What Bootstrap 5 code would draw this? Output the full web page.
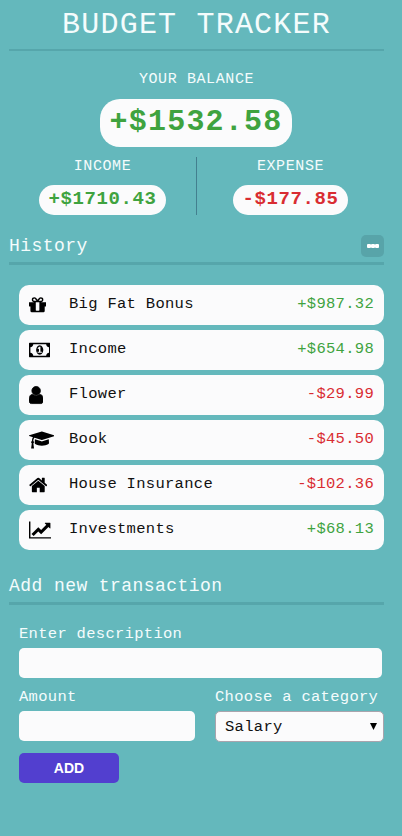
<!DOCTYPE html>
<html lang="en">
<head>
<meta charset="utf-8">
<meta name="viewport" content="width=device-width, initial-scale=1">
<title>Budget Tracker</title>
<link href="https://cdn.jsdelivr.net/npm/bootstrap@5.3.0/dist/css/bootstrap.min.css" rel="stylesheet">
<style>
body{background:#64b8bc;color:#f4fcfc;font:16px/18px "Courier New","Liberation Mono",monospace;min-height:836px;overflow:hidden}
.tracker{width:375px;margin-left:9px}
.app-title{font-size:30px;letter-spacing:1.2px;font-weight:400;line-height:36px;height:51px;padding-top:7px;border-bottom:2px solid #56a6ab}
.caption{font-size:15px;letter-spacing:.6px;line-height:18px}
.balance{padding-top:20px}
.pill{background:#fbfbfc;font-weight:700}
.pill-lg{font-size:30px;letter-spacing:1.2px;line-height:46px;height:48px;width:192px;border-radius:20px;margin:10px 1px 0 0}
.pill-sm{font-size:19px;letter-spacing:.6px;line-height:29px;height:30px;padding:0 9.5px;border-radius:15px}
.gain{color:#3fa33f}.loss{color:#d92c31}
.totals{height:58px;margin-top:10px}
.totals>div{width:187px}
.totals>div:first-child{border-right:1px solid #43808f;width:188px}
.totals .caption{line-height:20px}
.block-history{margin-top:20px}
.block-add{margin-top:25px}
.section-title{font-size:18px;letter-spacing:.43px;font-weight:400;line-height:22px;border-bottom:3px solid #56a6ab;height:30px}
.more{width:23px;height:22px;border-radius:5px;background:#58a4a9;border:0}
.more i{width:4px;height:4px;border-radius:1px;background:#fff}
.entries{gap:5px;margin:20px 0 0 10px}
.entry{height:40px;border-radius:10px;background:#fbfbfc;color:#111;padding:0 10px 0 9.5px}
.entry .glyph{width:40.5px;height:20px}
.entry svg{height:20px;display:block;fill:#000}
.entry .joined{stroke:#000;stroke-width:70}
.entry-text{font-size:15.5px;letter-spacing:.3px;line-height:38px;height:40px}
.entry-form{margin:20px 0 0 10px}
.form-pair{gap:20px;margin-top:10px}
.field-label{font-size:15.5px;letter-spacing:.3px;line-height:18px;display:block}
.field{height:30px;border:0;border-radius:5px;background:#fbfbfc;padding:0 9px;display:block;margin-top:5px}
.field-wide{width:363px}
.field-half{width:176px}
.choice{height:31px;width:169px;border:1px solid #a9a4ad;color:#111;font-size:15.5px;letter-spacing:.3px;padding-right:6px}
.choice svg{width:7px;height:7px}
.add-btn{width:100px;height:30px;border-radius:5px;background:#523fcf;color:#fff;border:0;font:700 14px/30px "Liberation Sans",Arial,sans-serif;letter-spacing:.1px;margin-top:11px}
</style>
</head>
<body>
<main class="tracker">
  <h1 class="app-title text-center mb-0">BUDGET TRACKER</h1>
  <section class="balance d-flex flex-column align-items-center">
    <div class="caption">YOUR BALANCE</div>
    <div class="pill pill-lg gain text-center">+$1532.58</div>
    <div class="totals d-flex w-100 text-center">
      <div class="d-flex flex-column align-items-center justify-content-between"><span class="caption">INCOME</span><span class="pill pill-sm gain">+$1710.43</span></div>
      <div class="d-flex flex-column align-items-center justify-content-between"><span class="caption">EXPENSE</span><span class="pill pill-sm loss">-$177.85</span></div>
    </div>
  </section>

  <section class="block-history">
    <div class="section-title d-flex justify-content-between">
      <span>History</span>
      <button class="more d-flex align-items-center justify-content-center p-0" aria-label="More"><i></i><i></i><i></i></button>
    </div>
    <ul class="entries list-unstyled d-flex flex-column">
      <li class="entry d-flex align-items-center"><span class="glyph"><svg viewBox="128 0 1536 1792"><path d="M1056 1356v-716h-320v716q0 25 18 38.5t46 13.5h192q28 0 46-13.5t18-38.5zm-456-844h195l-126-161q-26-31-69-31-40 0-68 28t-28 68 28 68 68 28zm688-96q0-40-28-68t-68-28q-43 0-69 31l-125 161h194q40 0 68-28t28-68zm376 256v320q0 14-9 23t-23 9h-96v416q0 40-28 68t-68 28h-1088q-40 0-68-28t-28-68v-416h-96q-14 0-23-9t-9-23v-320q0-14 9-23t23-9h440q-93 0-158.5-65.5t-65.5-158.5 65.5-158.5 158.5-65.5q107 0 168 77l128 165 128-165q61-77 168-77 93 0 158.5 65.5t65.5 158.5-65.5 158.5-158.5 65.5h440q14 0 23 9t9 23z"/></svg></span><span class="entry-text flex-grow-1">Big Fat Bonus</span><span class="entry-text gain">+$987.32</span></li>
      <li class="entry d-flex align-items-center"><span class="glyph"><svg viewBox="0 0 1920 1792"><path d="M768 1152h384v-96h-128v-448h-114l-148 137 77 80q42-37 55-57h2v288h-128v96zm512-256q0 70-21 142t-59.5 134-101.5 101-138 39-138-39-101.5-101-59.5-134-21-142 21-142 59.5-134 101.5-101 138-39 138 39 101.5 101 59.5 134 21 142zm512 256v-512q-106 0-181-75t-75-181h-1152q0 106-75 181t-181 75v512q106 0 181 75t75 181h1152q0-106 75-181t181-75zm128-832v1152q0 26-19 45t-45 19h-1792q-26 0-45-19t-19-45v-1152q0-26 19-45t45-19h1792q26 0 45 19t19 45z"/></svg></span><span class="entry-text flex-grow-1">Income</span><span class="entry-text gain">+$654.98</span></li>
      <li class="entry d-flex align-items-center"><span class="glyph"><svg class="joined" viewBox="256 0 1280 1792"><path d="M1536 1399q0 109-62.5 187t-150.5 78h-854q-88 0-150.5-78t-62.5-187q0-85 8.5-160.5t31.5-152 58.5-131 94-89 134.5-34.5q131 128 313 128t313-128q76 0 134.5 34.5t94 89 58.5 131 31.5 152 8.5 160.5zm-256-887q0 159-112.5 271.5t-271.5 112.5-271.5-112.5-112.5-271.5 112.5-271.5 271.5-112.5 271.5 112.5 112.5 271.5z"/></svg></span><span class="entry-text flex-grow-1">Flower</span><span class="entry-text loss">-$29.99</span></li>
      <li class="entry d-flex align-items-center"><span class="glyph"><svg viewBox="0 0 2304 1792"><path d="M1774 836l18 316q4 69-82 128t-235 93.5-323 34.5-323-34.5-235-93.5-82-128l18-316 574 181q22 7 48 7t48-7zm530-324q0 23-22 31l-1120 352q-4 1-10 1t-10-1l-652-206q-43 34-71 111.5t-34 178.5q63 36 63 109 0 69-58 107l58 433q2 14-8 25-9 11-24 11h-192q-15 0-24-11-10-11-8-25l58-433q-58-38-58-107 0-73 65-111 11-207 98-330l-333-104q-22-8-22-31t22-31l1120-352q4-1 10-1t10 1l1120 352q22 8 22 31z"/></svg></span><span class="entry-text flex-grow-1">Book</span><span class="entry-text loss">-$45.50</span></li>
      <li class="entry d-flex align-items-center"><span class="glyph"><svg viewBox="64 0 1664 1792"><path d="M1472 992v480q0 26-19 45t-45 19h-384v-384h-256v384h-384q-26 0-45-19t-19-45v-480q0-1 .5-3t.5-3l575-474 575 474q1 2 1 6zm223-69l-62 74q-8 9-21 11h-3q-13 0-21-7l-692-577-692 577q-12 8-24 7-13-2-21-11l-62-74q-8-10-7-23.5t11-21.5l719-599q32-26 76-26t76 26l244 204v-195q0-14 9-23t23-9h192q14 0 23 9t9 23v408l219 182q10 8 11 21.5t-7 23.5z"/></svg></span><span class="entry-text flex-grow-1">House Insurance</span><span class="entry-text loss">-$102.36</span></li>
      <li class="entry d-flex align-items-center"><span class="glyph"><svg viewBox="0 0 2048 1792"><path d="M2048 1536v128h-2048v-1536h128v1408h1920zm-128-1248v435q0 21-19.5 29.5t-35.5-7.5l-121-121-633 633q-10 10-23 10t-23-10l-233-233-416 416-192-192 585-585q10-10 23-10t23 10l233 233 464-464-121-121q-16-16-7.5-35.5t29.5-19.5h435q14 0 23 9t9 23z"/></svg></span><span class="entry-text flex-grow-1">Investments</span><span class="entry-text gain">+$68.13</span></li>
    </ul>
  </section>

  <section class="block-add">
    <div class="section-title">Add new transaction</div>
    <form class="entry-form">
      <label class="field-label" for="desc">Enter description</label>
      <input id="desc" class="field field-wide">
      <div class="form-pair d-flex">
        <div><label class="field-label" for="amount">Amount</label><input id="amount" class="field field-half"></div>
        <div><span class="field-label">Choose a category</span>
          <div class="field choice d-flex align-items-center justify-content-between" role="combobox" aria-label="Category"><span>Salary</span><svg viewBox="0 0 7 7"><path d="M0 0h7L3.5 7z"/></svg></div></div>
      </div>
      <button type="button" class="add-btn d-block text-center p-0">ADD</button>
    </form>
  </section>
</main>
<script src="https://cdn.jsdelivr.net/npm/bootstrap@5.3.0/dist/js/bootstrap.bundle.min.js"></script>
</body>
</html>
